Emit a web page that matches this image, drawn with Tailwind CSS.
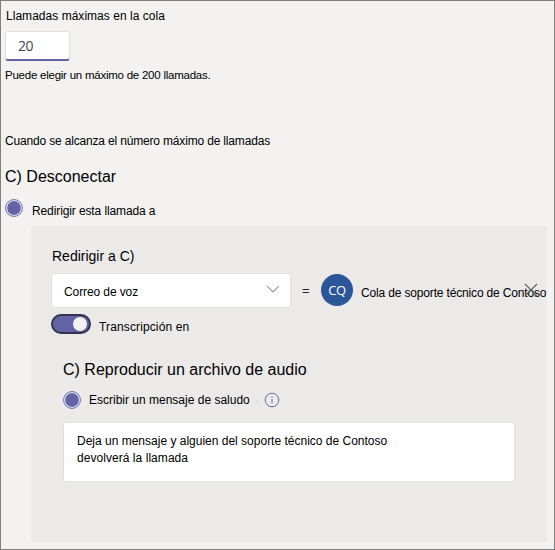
<!DOCTYPE html>
<html lang="es">
<head>
<meta charset="utf-8">
<title>Cola de llamadas</title>
<script src="https://cdn.jsdelivr.net/npm/@tailwindcss/browser@4"></script>
</head>
<body class="h-[550px] w-[555px] overflow-hidden">
<main class="flex h-[550px] w-[555px] flex-col border border-[#7f7f7f] bg-[#f3f2f1] pl-1 font-['Liberation_Sans',sans-serif] text-[12px] leading-4 whitespace-nowrap text-black">
  <label class="mt-[7px] block h-4 pl-px tracking-[0.03px]">Llamadas máximas en la cola</label>
  <div class="mt-[7px] flex h-[30px] w-[65px] items-center rounded-[3px] border border-b-2 border-[#e1dfdd] border-b-[#6264a7] bg-white pl-3 font-['Open_Sans',sans-serif] text-[14px] tracking-[-0.5px] text-[#484644]">20</div>
  <p class="mt-[6px] h-4 text-[11.5px] tracking-[-0.24px]">Puede elegir un máximo de 200 llamadas.</p>
  <p class="mt-[50px] h-4 tracking-[-0.17px]">Cuando se alcanza el número máximo de llamadas</p>
  <h2 class="mt-[18px] h-5 text-[16px] leading-5">C) Desconectar</h2>
  <div class="mt-[12px] flex h-[18px]">
    <svg class="h-[18px] w-[18px]" viewBox="0 0 18 18"><circle cx="9" cy="9" r="8.4" fill="#f7f7fb" stroke="#6264a7"/><circle cx="9" cy="9" r="6.9" fill="#6264a7"/></svg>
    <span class="mt-[4px] ml-[9px] tracking-[-0.11px]">Redirigir esta llamada a</span>
  </div>
  <section class="mt-[9px] ml-[26px] h-[316px] w-[516px] rounded-[3px] bg-[#ebeae9] pt-[20px]">
    <h3 class="ml-[21px] h-5 text-[14px] leading-5">Redirigir a C)</h3>
    <div class="mt-[7px] ml-[20px] flex h-[35px]">
      <div class="flex w-[240px] justify-between rounded-[3px] border border-[#e1dfdd] bg-white pr-[10px] pl-3">
        <span class="mt-[10px] tracking-[-0.1px]">Correo de voz</span>
        <svg class="mt-[11px] h-[9px] w-[14px]" viewBox="0 0 14 9" fill="none" stroke="#979593" stroke-width="1.1"><path d="M1.2 1.2 7 7l5.8-5.8"/></svg>
      </div>
      <span class="mt-[10px] ml-[11px] w-[8px] text-[13px] text-[#252423]">=</span>
      <span class="mt-px ml-[11px] flex h-8 w-8 items-center justify-center rounded-full bg-[#2b579a] font-['Open_Sans',sans-serif] text-[13px] tracking-[-0.5px] text-white">CQ</span>
      <div class="relative mt-[12px] ml-2 h-4 w-[186px]">
        <span class="tracking-[-0.16px]">Cola de soporte técnico de Contoso</span>
        <svg class="absolute -top-[2px] left-[163px] h-[14px] w-[14px]" viewBox="0 0 14 14" fill="none" stroke="#605e5c" stroke-width="1.1"><path d="m1 1 12 12M13 1 1 13"/></svg>
      </div>
    </div>
    <div class="mt-[6px] ml-[20px] flex h-5">
      <span class="flex h-5 w-10 items-center justify-end rounded-full border-2 border-[#33344a] bg-[#6264a7] pr-[2px]"><i class="block h-[14px] w-[14px] rounded-full bg-[#f3f2f1]"></i></span>
      <span class="mt-[5px] ml-2 tracking-[0.13px]">Transcripción en</span>
    </div>
    <h2 class="mt-[26px] ml-8 h-5 text-[16px] leading-5">C) Reproducir un archivo de audio</h2>
    <div class="mt-[11px] ml-8 flex h-[18px]">
      <svg class="h-[18px] w-[18px]" viewBox="0 0 18 18"><circle cx="9" cy="9" r="8.4" fill="#f7f7fb" stroke="#6264a7"/><circle cx="9" cy="9" r="6.9" fill="#6264a7"/></svg>
      <span class="mt-px ml-2 w-[161px]">Escribir un mensaje de saludo</span>
      <i class="mt-[10px] ml-[7px] block h-px w-px bg-[#b8b6b4]"></i>
      <svg class="mt-px ml-[6px] h-4 w-4" viewBox="0 0 16 16"><circle cx="8" cy="8" r="6.8" fill="none" stroke="#6264a7"/><path d="M8 4.2v1.6M8 7v4.6" stroke="#8b8cbd" stroke-width="1.3"/></svg>
    </div>
    <div class="mt-[13px] ml-8 h-[60px] w-[452px] rounded-[3px] border border-[#e1dfdd] bg-white pt-[10px] pl-[13px] leading-[17px]">
      <p>Deja un mensaje y alguien del soporte técnico de Contoso</p>
      <p class="tracking-[0.05px]">devolverá la llamada</p>
    </div>
  </section>
</main>
</body>
</html>
